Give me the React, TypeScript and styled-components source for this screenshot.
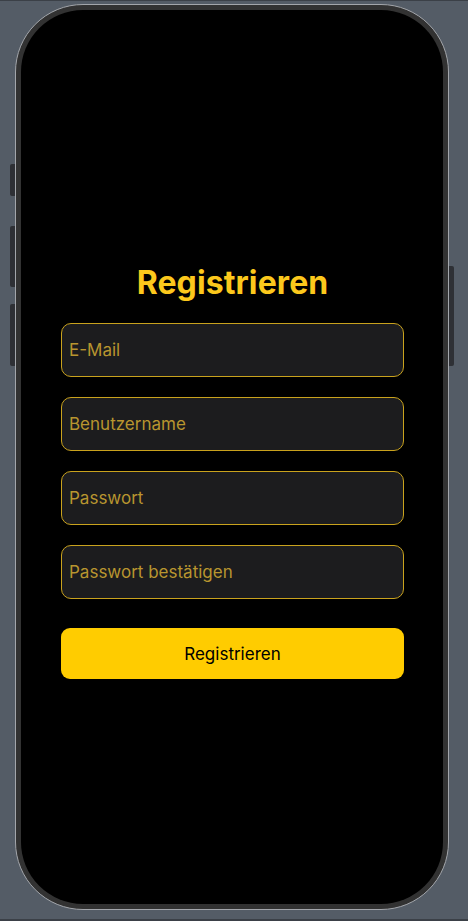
import React from "react";
import styled, { createGlobalStyle } from "styled-components";

const Global = createGlobalStyle`
  html, body { margin: 0; padding: 0; background: #545c66; }
  body { font-family: Inter, "Noto Sans", "Liberation Sans", sans-serif; }
  * { box-sizing: border-box; }
`;

const Page = styled.div`
  width: 468px;
  height: 921px;
  background: #545c66;
  border-top: 1px solid #3b4047;
  border-bottom: 2px solid #3b4047;
  padding: 3px 0 0 15px;
  overflow: hidden;
`;

const Phone = styled.div`
  position: relative;
  width: 434px;
  height: 906px;
  border: 1px solid #a3a6ab;
  border-radius: 68px;
  background: #323232;
  padding: 5px;
`;

const SideButton = styled.div<{ $side: "left" | "right"; $top: number; $h: number }>`
  position: absolute;
  top: ${(p) => p.$top}px;
  height: ${(p) => p.$h}px;
  width: 5px;
  background: #2e3035;
  ${(p) => (p.$side === "left" ? "left: -6px;" : "right: -6px;")}
  border-radius: ${(p) => (p.$side === "left" ? "2px 0 0 2px" : "0 2px 2px 0")};
`;

const Screen = styled.div`
  width: 100%;
  height: 100%;
  background: #000;
  border-radius: 62px;
  padding: 254px 39px 0 40px;
  display: flex;
  flex-direction: column;
`;

const Title = styled.h1`
  margin: 0 0 21px;
  text-align: center;
  color: #fcc81c;
  font-size: 32px;
  line-height: 38px;
  font-weight: 700;
  letter-spacing: 0.1px;
`;

const Fields = styled.div`
  display: flex;
  flex-direction: column;
  gap: 20px;
`;

const Field = styled.input`
  height: 54px;
  width: 100%;
  background: #1c1c1e;
  border: 1px solid #c9a21d;
  border-radius: 10px;
  padding: 0 7px;
  font-family: Inter, "Noto Sans", "Liberation Sans", sans-serif;
  font-size: 17px;
  color: #ffffff;
  outline: none;
  &::placeholder {
    color: #b8952f;
  }
`;

const SubmitButton = styled.button`
  margin-top: 29px;
  height: 51px;
  width: 100%;
  border: none;
  border-radius: 9px;
  background: #ffcc00;
  color: #000;
  font-family: Inter, "Noto Sans", "Liberation Sans", sans-serif;
  font-size: 17px;
  font-weight: 400;
  cursor: pointer;
`;

export default function App() {
  return (
    <>
      <Global />
      <Page>
        <Phone>
          <SideButton $side="left" $top={159} $h={32} />
          <SideButton $side="left" $top={221} $h={61} />
          <SideButton $side="left" $top={299} $h={62} />
          <SideButton $side="right" $top={261} $h={100} />
          <Screen>
            <Title>Registrieren</Title>
            <Fields>
              <Field type="email" placeholder="E-Mail" />
              <Field type="text" placeholder="Benutzername" />
              <Field type="password" placeholder="Passwort" />
              <Field type="password" placeholder="Passwort bestätigen" />
            </Fields>
            <SubmitButton>Registrieren</SubmitButton>
          </Screen>
        </Phone>
      </Page>
    </>
  );
}
